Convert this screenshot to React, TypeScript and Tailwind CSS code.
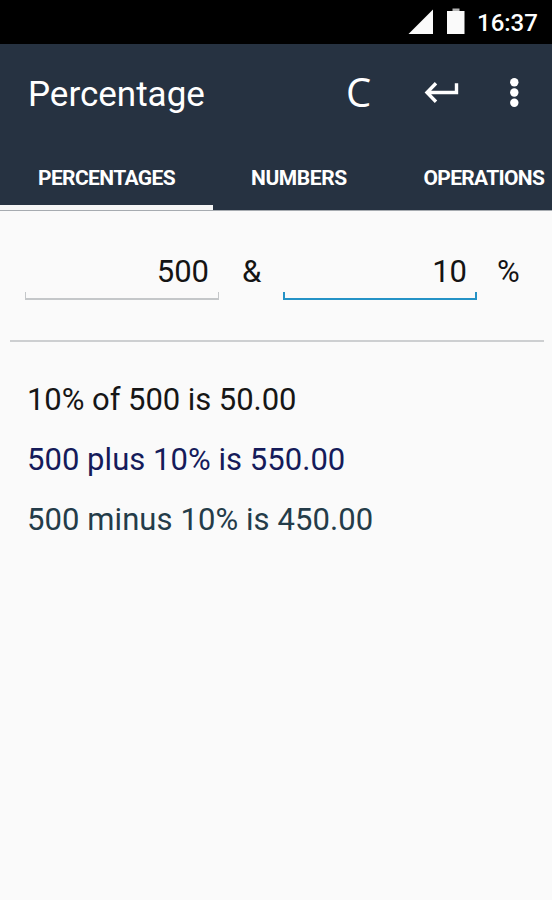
import React from "react";

function StatusBar() {
  return (
    <header className="flex h-11 shrink-0 items-start bg-black pl-[408px] text-white">
      <svg width="68" height="44" viewBox="408 0 68 44" fill="#fafafa" aria-label="Signal and battery">
        <path d="M408.500 34 433 9.500V34Z" />
        <path d="M447 11h17.500v23H447Z" />
        <path d="M452.500 8.500h7V11h-7Z" fill="#b5b5b5" />
      </svg>
      <span className="mt-[7px] ml-px text-[24px] leading-8 font-medium">16:37</span>
    </header>
  );
}

function Toolbar() {
  return (
    <div className="flex h-[100px] items-center pl-[28px]">
      <h1 className="mt-px w-[317px] text-[35px] leading-[40px] font-normal">Percentage</h1>
      <button className="-mt-1 w-[79px] pl-px text-left font-['Open_Sans',sans-serif] text-[40px] leading-[48px]">C</button>
      <svg className="-mt-[2px]" width="128" height="40" viewBox="424 73 128 40" fill="none" aria-label="Enter and more options">
        <path d="M436 83.300 427 92.500l9 9.200M427.500 92.500H456.500V83.200" stroke="white" strokeWidth="3.400" />
        <g fill="white">
          <circle cx="514.300" cy="82.300" r="4.200" />
          <circle cx="514.300" cy="92.500" r="4.200" />
          <circle cx="514.300" cy="102.700" r="4.200" />
        </g>
      </svg>
    </div>
  );
}

function Tabs() {
  return (
    <nav className="flex h-[66px] overflow-hidden text-[21px] leading-[68px] font-bold whitespace-nowrap">
      <div className="h-[66px] w-[213px] shrink-0 border-b-[5px] border-[#f5f5f5] pl-[38px]">
        <span className="tracking-[-0.620px]">PERCENTAGES</span>
      </div>
      <div className="w-[172px] shrink-0 pl-[38px]">
        <span className="tracking-[-0.400px]">NUMBERS</span>
      </div>
      <div className="w-[167px] shrink-0 pl-[38.500px]">
        <span className="tracking-[-0.680px]">OPERATIONS</span>
      </div>
    </nav>
  );
}

function Field({ value, active = false }: { value: string; active?: boolean }) {
  return (
    <div className={`flex w-[194px] flex-col ${active ? "text-[#2492c6]" : "text-[#c4c7c9]"}`}>
      <span className="h-[44px] pr-[10px] text-right text-[31px] leading-[40px] text-[#141414]">{value}</span>
      <span className={`-mt-1 h-2 border-b-2 border-current ${active ? "border-x-2" : "border-x"}`} />
    </div>
  );
}

export default function App() {
  return (
    <main className="flex h-[900px] w-[552px] flex-col overflow-hidden bg-[#fafafa] font-[Roboto,sans-serif]">
      <StatusBar />
      <section className="h-[167px] shrink-0 border-b border-[#a6abb0] bg-[#263241] text-white">
        <Toolbar />
        <Tabs />
      </section>
      <section className="flex h-[129px] shrink-0 pt-[41px] pl-[25px] text-[31px] leading-[40px] text-[#141414]">
        <Field value="500" />
        <span className="w-[64px] pl-[23px]">&amp;</span>
        <Field value="10" active />
        <span className="pl-5">%</span>
      </section>
      <hr className="mr-2 ml-[10px] h-[2px] shrink-0 border-0 bg-[#cdcfd1]" />
      <section className="flex flex-col pt-[28px] pl-[27px] text-[31px] leading-[60px] whitespace-nowrap">
        <p className="text-[#161616]"><span className="tracking-[-0.050px]">10% of 500 is 50.00</span></p>
        <p className="text-[#151b5a]"><span className="tracking-[0.040px]">500 plus 10% is 550.00</span></p>
        <p className="text-[#243c49]"><span className="tracking-[0.080px]">500 minus 10% is 450.00</span></p>
      </section>
    </main>
  );
}
